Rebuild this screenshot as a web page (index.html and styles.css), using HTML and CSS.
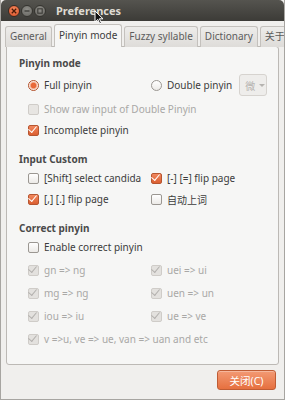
FILE: index.html
```html
<!DOCTYPE html>
<html lang="en">
<head>
    <meta charset="UTF-8">
    <title>Preferences</title>
    <link rel="stylesheet" href="styles.css">
</head>
<body>
    <div class="window">
        <header class="titlebar">
            <div class="win-buttons">
                <span class="win-btn win-close">
                    <svg width="6" height="6" viewBox="0 0 6 6"><path d="M0.8 0.8 L5.2 5.2 M5.2 0.8 L0.8 5.2" stroke="#4a1a08" stroke-width="1.3"/></svg>
                </span>
                <span class="win-btn win-min">
                    <svg width="6" height="6" viewBox="0 0 6 6"><path d="M0.5 3 H5.5" stroke="#3c3b37" stroke-width="1.3"/></svg>
                </span>
                <span class="win-btn win-max">
                    <svg width="6" height="6" viewBox="0 0 6 6"><rect x="0.8" y="0.8" width="4.4" height="4.4" fill="none" stroke="#3c3b37" stroke-width="1.1"/></svg>
                </span>
            </div>
            <span class="win-title">Preferences</span>
            <svg class="cursor" width="10" height="15" viewBox="0 0 10 15"><path d="M1 1 V12 L3.8 9.4 L5.8 13.8 L7.4 13.1 L5.4 8.8 H9 Z" fill="#111" stroke="#fff" stroke-width="1"/></svg>
        </header>

        <nav class="tabs">
            <span class="tab">General</span>
            <span class="tab tab-active">Pinyin mode</span>
            <span class="tab">Fuzzy syllable</span>
            <span class="tab">Dictionary</span>
            <span class="tab">关于</span>
        </nav>

        <main class="panel">
            <section class="group">
                <h3 class="group-title">Pinyin mode</h3>
                <div class="grid grid-mode">
                    <label class="opt opt-tall"><span class="radio radio-on"></span>Full pinyin</label>
                    <div class="opt opt-tall">
                        <span class="radio"></span>Double pinyin
                        <span class="combo">微<span class="combo-arrow"></span></span>
                    </div>
                    <label class="opt opt-wide opt-disabled"><span class="check check-off"></span>Show raw input of Double Pinyin</label>
                    <label class="opt opt-wide"><span class="check check-on"></span>Incomplete pinyin</label>
                </div>
            </section>

            <section class="group">
                <h3 class="group-title">Input Custom</h3>
                <div class="grid">
                    <label class="opt"><span class="check"></span>[Shift] select candida</label>
                    <label class="opt"><span class="check check-on"></span>[-] [=] flip page</label>
                    <label class="opt"><span class="check check-on"></span>[,] [.] flip page</label>
                    <label class="opt"><span class="check"></span>自动上词</label>
                </div>
            </section>

            <section class="group">
                <h3 class="group-title">Correct pinyin</h3>
                <div class="grid grid-loose">
                    <label class="opt opt-wide"><span class="check"></span>Enable correct pinyin</label>
                    <label class="opt opt-disabled"><span class="check check-dim"></span>gn =&gt; ng</label>
                    <label class="opt opt-disabled"><span class="check check-dim"></span>uei =&gt; ui</label>
                    <label class="opt opt-disabled"><span class="check check-dim"></span>mg =&gt; ng</label>
                    <label class="opt opt-disabled"><span class="check check-dim"></span>uen =&gt; un</label>
                    <label class="opt opt-disabled"><span class="check check-dim"></span>iou =&gt; iu</label>
                    <label class="opt opt-disabled"><span class="check check-dim"></span>ue =&gt; ve</label>
                    <label class="opt opt-wide opt-disabled"><span class="check check-dim"></span>v =&gt;u, ve =&gt; ue, van =&gt; uan and etc</label>
                </div>
            </section>
        </main>

        <footer class="actions">
            <button class="btn-close">关闭(C)</button>
        </footer>
    </div>
</body>
</html>
```

FILE: styles.css
```css
/* Base */
* {
    margin: 0;
    padding: 0;
    box-sizing: border-box;
}

body {
    font-family: 'Noto Sans', 'Noto Sans CJK SC', sans-serif;
    font-size: 10px;
    color: #3c3c3c;
    background: #f0efed;
}

.window {
    width: 285px;
    height: 400px;
    background: #f0efed;
    border-left: 1px solid #a7a5a1;
    border-right: 1px solid #a7a5a1;
    border-bottom: 1px solid #a7a5a1;
    overflow: hidden;
}

/* Title bar */
.titlebar {
    position: relative;
    height: 21px;
    display: flex;
    align-items: center;
    background: linear-gradient(#55544f, #3c3b37);
    border-radius: 5px 5px 0 0;
    padding-left: 7px;
}

.win-buttons {
    display: flex;
    gap: 1px;
}

.win-btn {
    width: 12px;
    height: 12px;
    border-radius: 50%;
    display: flex;
    align-items: center;
    justify-content: center;
}

.win-close {
    background: radial-gradient(circle at 50% 35%, #f58a5f, #d84e25);
    border: 1px solid #3a2a22;
}

.win-min,
.win-max {
    background: radial-gradient(circle at 50% 35%, #8f8e89, #65645f);
    border: 1px solid #35342f;
}

.win-title {
    margin-left: 10px;
    color: #dfdbd2;
    font-weight: 700;
    font-size: 11px;
}

.cursor {
    position: absolute;
    left: 93px;
    top: 10px;
}

/* Tabs */
.tabs {
    display: flex;
    align-items: flex-end;
    gap: 2px;
    height: 26px;
    padding-left: 4px;
    margin-bottom: -1px;
    position: relative;
    z-index: 1;
}

.tab {
    height: 21px;
    padding: 0 4px;
    line-height: 19px;
    color: #5c5c5c;
    background: linear-gradient(#edecea, #dedcd9);
    border: 1px solid #c4c1bd;
    border-bottom: none;
    border-radius: 3px 3px 0 0;
    white-space: nowrap;
}

.tab-active {
    height: 23px;
    line-height: 21px;
    color: #3c3c3c;
    background: #f6f6f5;
}

/* Panel */
.panel {
    margin: 0 5px;
    height: 319px;
    background: #f6f6f5;
    border: 1px solid #bcb9b5;
    border-radius: 0 3px 3px 3px;
    padding: 9px 0 0 12px;
}

.group {
    margin-bottom: 14px;
}

.group-title {
    height: 14px;
    line-height: 14px;
    font-size: 10px;
    font-weight: 700;
    color: #4a4a4a;
    margin-bottom: 4px;
}

.grid {
    display: grid;
    grid-template-columns: 123px 1fr;
    row-gap: 5px;
    padding-left: 9px;
}

.grid-loose {
    row-gap: 7px;
}

.opt {
    display: flex;
    align-items: center;
    height: 16px;
    white-space: nowrap;
    overflow: hidden;
}

.opt-tall {
    height: 22px;
    overflow: visible;
}

.opt-wide {
    grid-column: 1 / 3;
}

.opt-disabled {
    color: #a9a8a6;
}

/* Controls */
.check,
.radio {
    flex: none;
    width: 11px;
    height: 11px;
    margin-right: 5px;
    border: 1px solid #9b9792;
    background: linear-gradient(#ffffff, #eceae7);
}

.check {
    border-radius: 2px;
}

.radio {
    border-radius: 50%;
}

.radio-on {
    border-color: #b24f28;
    background: radial-gradient(circle, #e8693a 0 2.5px, #f4a483 3px, #fff 4.5px);
}

.check-on {
    border-color: #b65530;
    background: linear-gradient(#f1875d, #db5f31);
    position: relative;
}

.check-on::after,
.check-dim::after {
    content: "";
    position: absolute;
    left: 1px;
    top: 0;
    width: 7px;
    height: 4px;
    border-left: 1.5px solid #fff;
    border-bottom: 1.5px solid #fff;
    transform: rotate(-50deg);
    transform-origin: 3px 4px;
}

.check-off {
    border-color: #cfccc8;
    background: #e7e5e2;
}

.check-dim {
    position: relative;
    border-color: #cfccc8;
    background: #e3e1de;
}

.check-dim::after {
    border-color: #b3b1ae;
}

/* Combo */
.combo {
    margin-left: 7px;
    width: 28px;
    height: 22px;
    display: flex;
    align-items: center;
    padding-left: 5px;
    gap: 4px;
    color: #b5b3b0;
    font-size: 10px;
    border: 1px solid #d6d3cf;
    border-radius: 3px;
    background: #eeedeb;
}

.combo-arrow {
    width: 0;
    height: 0;
    border-left: 3px solid transparent;
    border-right: 3px solid transparent;
    border-top: 3px solid #b5b3b0;
}

/* Footer */
.actions {
    display: flex;
    justify-content: flex-end;
    padding: 5px 8px 0 0;
}

.btn-close {
    width: 59px;
    height: 20px;
    font-family: 'Noto Sans', 'Noto Sans CJK SC', sans-serif;
    font-size: 10.5px;
    color: #fff;
    background: linear-gradient(#f39a74, #e6703f);
    border: 1px solid #bf5c34;
    border-radius: 3px;
    box-shadow: inset 0 1px 0 rgba(255, 255, 255, 0.3);
}
```
